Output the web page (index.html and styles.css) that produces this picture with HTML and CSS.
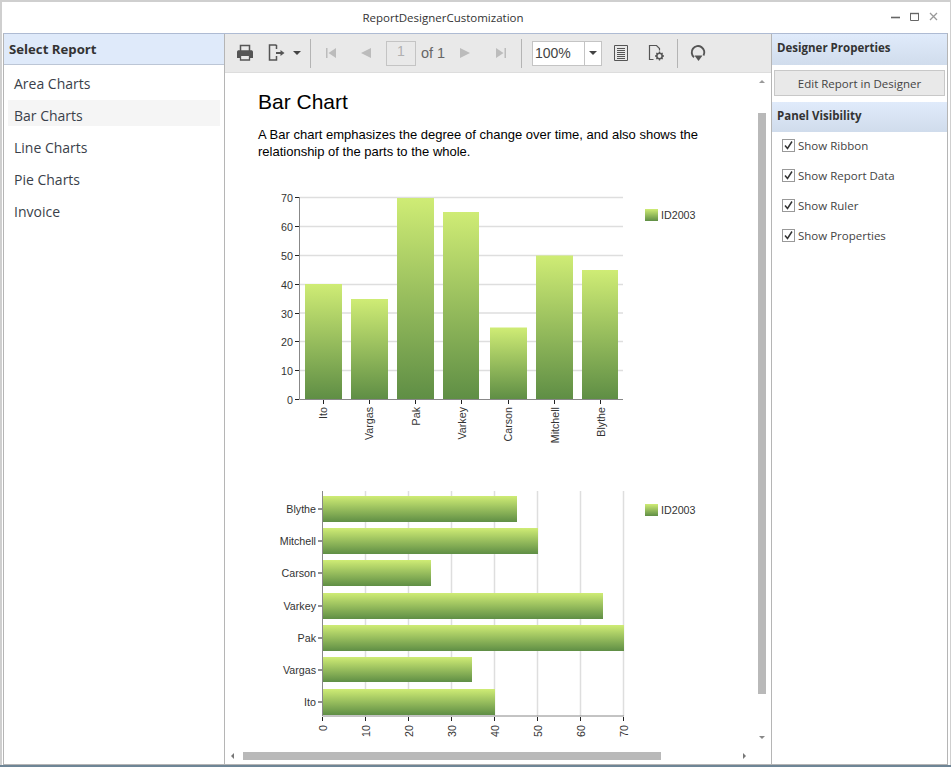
FILE: index.html
```html
<!DOCTYPE html>
<html lang="en">
<head>
    <meta charset="UTF-8">
    <title>ReportDesignerCustomization</title>
    <link rel="stylesheet" href="styles.css">
</head>
<body>
    <div class="window">
        <div class="titlebar">
            <span class="title">ReportDesignerCustomization</span>
            <div class="win-btns">
                <svg width="12" height="12" viewBox="0 0 12 12"><path d="M1 6.500h9" stroke="#666" stroke-width="1.600"/></svg>
                <svg width="12" height="12" viewBox="0 0 12 12"><path d="M1.500 2.500h8v7h-8z" fill="none" stroke="#666" stroke-width="1"/><path d="M1 2.500h9" stroke="#666" stroke-width="1.400"/></svg>
                <svg width="12" height="12" viewBox="0 0 12 12"><path d="M2 2l7 7M9 2l-7 7" stroke="#999" stroke-width="1.300"/></svg>
            </div>
        </div>

        <div class="panels">
            <div class="left-panel">
                <div class="left-header">Select Report</div>
                <ul class="report-list">
                    <li>Area Charts</li>
                    <li class="selected">Bar Charts</li>
                    <li>Line Charts</li>
                    <li>Pie Charts</li>
                    <li>Invoice</li>
                </ul>
            </div>

            <div class="center-panel">
                <div class="toolbar">
                    <span class="tb-btn w32">
                        <svg width="18" height="18" viewBox="0 0 18 18"><path d="M4.500 7V1.500h9V7" fill="none" stroke="#555" stroke-width="1.500"/><path d="M1 8.200C1 6.900 1.700 6.300 3 6.300h12c1.300 0 2 .6 2 1.900V14h-3v-2H4v2H1z" fill="#555"/><path d="M4.500 12v4h9v-4" fill="none" stroke="#555" stroke-width="1.300"/></svg>
                    </span>
                    <span class="tb-btn w32">
                        <svg width="18" height="18" viewBox="0 0 18 18"><path d="M8.500 5V1.500l-1-.5H1.500v15h7v-4" fill="none" stroke="#555" stroke-width="1.500"/><path d="M8 9h5" stroke="#555" stroke-width="2"/><path d="M12.500 6l4 3-4 3z" fill="#555"/></svg>
                    </span>
                    <span class="caret-btn"><i class="caret"></i></span>
                    <span class="sep sep-first"></span>
                    <span class="tb-btn w40 off">
                        <svg width="12" height="12" viewBox="0 0 12 12"><path d="M1 1h1.500v10H1z M11 1v10L3.500 6z" fill="#bcbcbc"/></svg>
                    </span>
                    <span class="tb-btn w30 off">
                        <svg width="12" height="12" viewBox="0 0 12 12"><path d="M11 1v10L1 6z" fill="#bcbcbc"/></svg>
                    </span>
                    <span class="page-box">1</span>
                    <span class="page-of">of 1</span>
                    <span class="tb-btn w38 off">
                        <svg width="12" height="12" viewBox="0 0 12 12"><path d="M1 1v10L11 6z" fill="#bcbcbc"/></svg>
                    </span>
                    <span class="tb-btn w34 off">
                        <svg width="12" height="12" viewBox="0 0 12 12"><path d="M11 1H9.500v10H11z M1 1v10L8.500 6z" fill="#bcbcbc"/></svg>
                    </span>
                    <span class="sep sep-mid"></span>
                    <div class="zoom-box">
                        <span class="zoom-value">100%</span>
                        <span class="zoom-arrow"><i class="caret"></i></span>
                    </div>
                    <span class="tb-btn w38">
                        <svg width="16" height="16" viewBox="0 0 16 16"><path d="M1.500.5h13v15h-13z" fill="none" stroke="#555"/><path d="M4 3.500h8M4 5.500h8M4 7.500h8M4 9.500h8M4 11.500h8M4 13.500h8" stroke="#555"/></svg>
                    </span>
                    <span class="tb-btn w34">
                        <svg width="18" height="18" viewBox="0 0 18 18"><path d="M5.500 15.500h-4v-14h7l3 3v2" fill="none" stroke="#555" stroke-width="1.200"/><circle cx="11.500" cy="12" r="2.700" fill="none" stroke="#555" stroke-width="1.600"/><path d="M11.500 7.500v2M11.500 14.500v2M7 12h2M14 12h2M8.400 8.900l1.300 1.300M13.300 13.800l1.300 1.300M14.600 8.900l-1.300 1.300M9.700 13.800l-1.300 1.300" stroke="#555" stroke-width="1.300"/></svg>
                    </span>
                    <span class="sep sep-last"></span>
                    <span class="tb-btn w40">
                        <svg width="18" height="18" viewBox="0 0 18 18"><path d="M5 13.200A6.300 6.300 0 1 1 14.500 11.500" fill="none" stroke="#555" stroke-width="1.900"/><path d="M5.500 11.500h8l-4 5.500z" fill="#555"/></svg>
                    </span>
                </div>

                <div class="viewer">
                    <div class="viewer-main">
                        <div class="report">
                            <h1>Bar Chart</h1>
                            <p>A Bar chart emphasizes the degree of change over time, and also shows the relationship of the parts to the whole.</p>

                            <svg class="chart chart-top" width="450" height="265" viewBox="258 185 450 265">
                                <defs>
                                    <linearGradient id="barV" x1="0" y1="0" x2="0" y2="1">
                                        <stop offset="0" stop-color="#cfec75"/>
                                        <stop offset="1" stop-color="#5f8e45"/>
                                    </linearGradient>
                                </defs>
                                <g class="grid">
                                    <path d="M300 197.500H623M300 226.500H623M300 255.500H623M300 284.500H623M300 313H623M300 341.500H623M300 370.500H623"/>
                                </g>
                                <g class="bars" fill="url(#barV)">
                                    <rect x="305" y="284" width="37" height="115"/>
                                    <rect x="351" y="299" width="37" height="100"/>
                                    <rect x="397" y="198" width="37" height="201"/>
                                    <rect x="443" y="212" width="36" height="187"/>
                                    <rect x="490" y="327.500" width="37" height="71.500"/>
                                    <rect x="536" y="255.500" width="37" height="143.500"/>
                                    <rect x="582" y="270" width="36" height="129"/>
                                </g>
                                <path class="axis" d="M299.500 197V399.500H623"/>
                                <path class="tick" d="M295 197.500h4M295 226.500h4M295 255.500h4M295 284.500h4M295 313.500h4M295 341.500h4M295 370.500h4M295 399.500h4M323.500 400v4M369.500 400v4M415.500 400v4M461.500 400v4M508.500 400v4M554.500 400v4M600.500 400v4"/>
                                <g class="labels" text-anchor="end">
                                    <text x="293" y="201.500">70</text>
                                    <text x="293" y="230.500">60</text>
                                    <text x="293" y="259.500">50</text>
                                    <text x="293" y="288.500">40</text>
                                    <text x="293" y="317.500">30</text>
                                    <text x="293" y="345.500">20</text>
                                    <text x="293" y="374.500">10</text>
                                    <text x="293" y="403.500">0</text>
                                    <text transform="translate(327 407) rotate(-90)">Ito</text>
                                    <text transform="translate(373 407) rotate(-90)">Vargas</text>
                                    <text transform="translate(420 407) rotate(-90)">Pak</text>
                                    <text transform="translate(466 407) rotate(-90)">Varkey</text>
                                    <text transform="translate(512 407) rotate(-90)">Carson</text>
                                    <text transform="translate(559 407) rotate(-90)">Mitchell</text>
                                    <text transform="translate(605 407) rotate(-90)">Blythe</text>
                                </g>
                                <rect x="645" y="209" width="13" height="12" fill="url(#barV)"/>
                                <text class="labels" x="661" y="219">ID2003</text>
                            </svg>

                            <svg class="chart chart-bottom" width="450" height="260" viewBox="258 485 450 260">
                                <g class="grid">
                                    <path d="M365.500 491V716M408.500 491V716M451.500 491V716M494.500 491V716M537.500 491V716M580.500 491V716M623.500 491V716"/>
                                </g>
                                <g class="bars" fill="url(#barV)">
                                    <rect x="323" y="496" width="194" height="26"/>
                                    <rect x="323" y="528" width="215" height="26"/>
                                    <rect x="323" y="560" width="108" height="26"/>
                                    <rect x="323" y="593" width="280" height="26"/>
                                    <rect x="323" y="625" width="301" height="26"/>
                                    <rect x="323" y="657" width="149" height="25"/>
                                    <rect x="323" y="689" width="172" height="26"/>
                                </g>
                                <path class="axis" d="M322.500 491V716H624"/>
                                <path class="tick" d="M318 509h4M318 541h4M318 573h4M318 606h4M318 638h4M318 670h4M318 702h4M322.500 717v4M365.500 717v4M408.500 717v4M451.500 717v4M494.500 717v4M537.500 717v4M580.500 717v4M623.500 717v4"/>
                                <g class="labels" text-anchor="end">
                                    <text x="316" y="513">Blythe</text>
                                    <text x="316" y="545">Mitchell</text>
                                    <text x="316" y="577">Carson</text>
                                    <text x="316" y="610">Varkey</text>
                                    <text x="316" y="642">Pak</text>
                                    <text x="316" y="674">Vargas</text>
                                    <text x="316" y="706">Ito</text>
                                    <text transform="translate(327 725) rotate(-90)">0</text>
                                    <text transform="translate(370 725) rotate(-90)">10</text>
                                    <text transform="translate(413 725) rotate(-90)">20</text>
                                    <text transform="translate(456 725) rotate(-90)">30</text>
                                    <text transform="translate(499 725) rotate(-90)">40</text>
                                    <text transform="translate(542 725) rotate(-90)">50</text>
                                    <text transform="translate(585 725) rotate(-90)">60</text>
                                    <text transform="translate(628 725) rotate(-90)">70</text>
                                </g>
                                <rect x="645" y="504" width="13" height="12" fill="url(#barV)"/>
                                <text class="labels" x="661" y="514">ID2003</text>
                            </svg>
                        </div>
                    </div>
                    <div class="vscroll">
                        <i class="arrow-up"></i>
                        <div class="vthumb"></div>
                        <i class="arrow-down"></i>
                    </div>
                    <div class="hscroll">
                        <i class="arrow-left"></i>
                        <div class="hthumb"></div>
                        <i class="arrow-right"></i>
                    </div>
                </div>
            </div>

            <div class="right-panel">
                <div class="right-header">Designer Properties</div>
                <button class="edit-btn">Edit Report in Designer</button>
                <div class="right-header visibility">Panel Visibility</div>
                <div class="check-row"><span class="check"><svg width="11" height="11" viewBox="0 0 11 11"><path d="M2 5.500l2.500 3L9 1.500" fill="none" stroke="#333" stroke-width="1.500"/></svg></span>Show Ribbon</div>
                <div class="check-row"><span class="check"><svg width="11" height="11" viewBox="0 0 11 11"><path d="M2 5.500l2.500 3L9 1.500" fill="none" stroke="#333" stroke-width="1.500"/></svg></span>Show Report Data</div>
                <div class="check-row"><span class="check"><svg width="11" height="11" viewBox="0 0 11 11"><path d="M2 5.500l2.500 3L9 1.500" fill="none" stroke="#333" stroke-width="1.500"/></svg></span>Show Ruler</div>
                <div class="check-row"><span class="check"><svg width="11" height="11" viewBox="0 0 11 11"><path d="M2 5.500l2.500 3L9 1.500" fill="none" stroke="#333" stroke-width="1.500"/></svg></span>Show Properties</div>
            </div>
        </div>
        <div class="taskbar-strip"></div>
    </div>
</body>
</html>
```

FILE: styles.css
```css
html, body {
    margin: 0;
    padding: 0;
    background: #ffffff;
}
body {
    font-family: 'Open Sans', sans-serif;
    color: #333;
    overflow: hidden;
}
.window {
    width: 951px;
    height: 767px;
    box-sizing: border-box;
    border-top: 2px solid #cfcfcf;
    border-left: 2px solid #cfcfcf;
    border-right: 1px solid #cfcfcf;
    display: flex;
    flex-direction: column;
    background: #ffffff;
}
.titlebar {
    height: 31px;
    flex: none;
    display: flex;
    align-items: center;
    justify-content: center;
    position: relative;
    font-size: 11.500px;
    color: #333;
}
.title {
    margin-left: -66px;
}
.win-btns {
    position: absolute;
    right: 10px;
    top: 9px;
    display: flex;
    gap: 7px;
}
.panels {
    flex: none;
    height: 732px;
    display: flex;
    margin-left: 1px;
    margin-right: 2px;
    border-top: 1px solid #aebbd3;
    border-left: 1px solid #b5b5b5;
    border-right: 1px solid #b5b5b5;
    border-bottom: 1px solid #b5b5b5;
    box-sizing: border-box;
}
.taskbar-strip {
    flex: none;
    height: 2px;
    margin-left: -2px;
    margin-right: -1px;
    background: #6e8596;
}

/* left */
.left-panel {
    width: 220px;
    flex: none;
    border-right: 1px solid #b5b5b5;
    box-sizing: content-box;
}
.left-header {
    height: 30px;
    line-height: 30px;
    padding-left: 5px;
    background: #dfeafa;
    border-bottom: 1px solid #bcc6d6;
    font-size: 13.200px;
    font-weight: bold;
    color: #333;
}
.report-list {
    list-style: none;
    margin: 3px 0 0 0;
    padding: 0 4px;
}
.report-list li {
    height: 23px;
    padding-top: 3px;
    line-height: 26px;
    margin-bottom: 6px;
    padding-left: 6px;
    font-size: 14px;
    color: #3a3f4a;
}
.report-list li.selected {
    background: #f5f5f5;
}

/* center */
.center-panel {
    width: 546px;
    flex: none;
    display: flex;
    flex-direction: column;
}
.toolbar {
    height: 39px;
    flex: none;
    box-sizing: border-box;
    display: flex;
    align-items: center;
    padding-left: 4px;
    background: #e9e9e9;
    border-bottom: 1px solid #dddddd;
}
.tb-btn {
    display: flex;
    align-items: center;
    justify-content: center;
    height: 30px;
}
.w30 { width: 30px; }
.w32 { width: 32px; }
.w34 { width: 34px; }
.w38 { width: 38px; }
.w40 { width: 40px; }
.caret-btn {
    width: 8px;
    display: flex;
    justify-content: center;
}
.caret {
    display: block;
    width: 0;
    height: 0;
    border-left: 4px solid transparent;
    border-right: 4px solid transparent;
    border-top: 4px solid #444;
}
.sep {
    width: 1px;
    height: 29px;
    background: #b4b4b4;
    flex: none;
}
.sep-first { margin-left: 9px; }
.sep-mid { margin-left: 3px; }
.sep-last { margin-left: 3px; }
.page-box {
    width: 30px;
    height: 25px;
    box-sizing: border-box;
    margin-left: 5px;
    border: 1px solid #c4c4c4;
    text-align: center;
    line-height: 19px;
    font-family: 'Liberation Sans', sans-serif;
    font-size: 14px;
    color: #b0b0b0;
}
.page-of {
    width: 25px;
    margin-left: 5px;
    font-family: 'Liberation Sans', sans-serif;
    font-size: 14.500px;
    color: #666;
}
.zoom-box {
    width: 70px;
    height: 25px;
    box-sizing: border-box;
    margin-left: 10px;
    display: flex;
    background: #ffffff;
    border: 1px solid #c4c4c4;
}
.zoom-value {
    flex: 1;
    padding-left: 2px;
    line-height: 23px;
    font-family: 'Liberation Sans', sans-serif;
    font-size: 14px;
    color: #444;
}
.zoom-arrow {
    width: 16px;
    border-left: 1px solid #c4c4c4;
    display: flex;
    align-items: center;
    justify-content: center;
}
.viewer {
    flex: 1;
    min-height: 0;
    display: grid;
    grid-template-columns: 530px 16px;
    grid-template-rows: 672px 20px;
}
.viewer-main {
    overflow: hidden;
}
.report {
    padding: 0 0 0 33px;
    font-family: 'Liberation Sans', sans-serif;
    color: #000;
}
.report h1 {
    margin: 16px 0 0 0;
    font-size: 21px;
    line-height: 26px;
    font-weight: normal;
}
.report p {
    width: 440px;
    margin: 11px 0 0 0;
    font-size: 13px;
    line-height: 17px;
    text-align: justify;
}
.chart {
    display: block;
}
.chart-top { margin-top: 25px; }
.chart-bottom { margin-top: 35px; }
.grid path {
    stroke: #dedede;
    stroke-width: 1.500;
    fill: none;
}
.axis {
    stroke: #888;
    stroke-width: 1;
    fill: none;
}
.tick {
    stroke: #222;
    stroke-width: 1;
    fill: none;
}
.labels {
    font-family: 'Liberation Sans', sans-serif;
    font-size: 10.700px;
    fill: #333;
}

/* scrollbars */
.vscroll {
    display: flex;
    flex-direction: column;
    align-items: center;
    background: #ffffff;
    padding-top: 7px;
    padding-right: 2px;
}
.vthumb {
    width: 8px;
    height: 581px;
    margin-top: 30px;
    background: #b9b9b9;
}
.arrow-up, .arrow-down, .arrow-left, .arrow-right {
    display: block;
    width: 0;
    height: 0;
    flex: none;
}
.arrow-up {
    border-left: 3px solid transparent;
    border-right: 3px solid transparent;
    border-bottom: 3px solid #999;
}
.arrow-down {
    margin-top: 42px;
    border-left: 3px solid transparent;
    border-right: 3px solid transparent;
    border-top: 3px solid #888;
}
.hscroll {
    grid-column: 1 / 3;
    display: flex;
    align-items: center;
    padding-left: 6px;
    padding-top: 2px;
    box-sizing: border-box;
}
.hthumb {
    width: 418px;
    height: 8px;
    margin-left: 9px;
    background: #b9b9b9;
}
.arrow-left {
    border-top: 3px solid transparent;
    border-bottom: 3px solid transparent;
    border-right: 3px solid #777;
}
.arrow-right {
    margin-left: 82px;
    border-top: 3px solid transparent;
    border-bottom: 3px solid transparent;
    border-left: 3px solid #777;
}

/* right */
.right-panel {
    flex: 1;
    border-left: 1px solid #b5b5b5;
}
.right-header {
    height: 31px;
    line-height: 27px;
    padding-left: 5px;
    background: linear-gradient(#e0ebfb, #d0dcec);
    font-size: 11.500px;
    font-weight: bold;
    color: #333;
}
.edit-btn {
    display: block;
    width: 171px;
    height: 26px;
    margin: 5px 0 6px 2px;
    padding: 0;
    background: #e9e9e9;
    border: 1px solid #c8c8c8;
    font-family: 'Open Sans', sans-serif;
    font-size: 11.500px;
    color: #444;
}
.visibility {
    height: 30px;
}
.check-row {
    display: flex;
    align-items: center;
    height: 30px;
    padding-left: 10px;
    font-size: 11.500px;
    color: #444;
}
.visibility + .check-row { margin-top: -2px; }
.check {
    width: 11px;
    height: 11px;
    margin-right: 3px;
    border: 1px solid #999;
    background: #fff;
    display: block;
    flex: none;
}
.check svg {
    display: block;
}
```
